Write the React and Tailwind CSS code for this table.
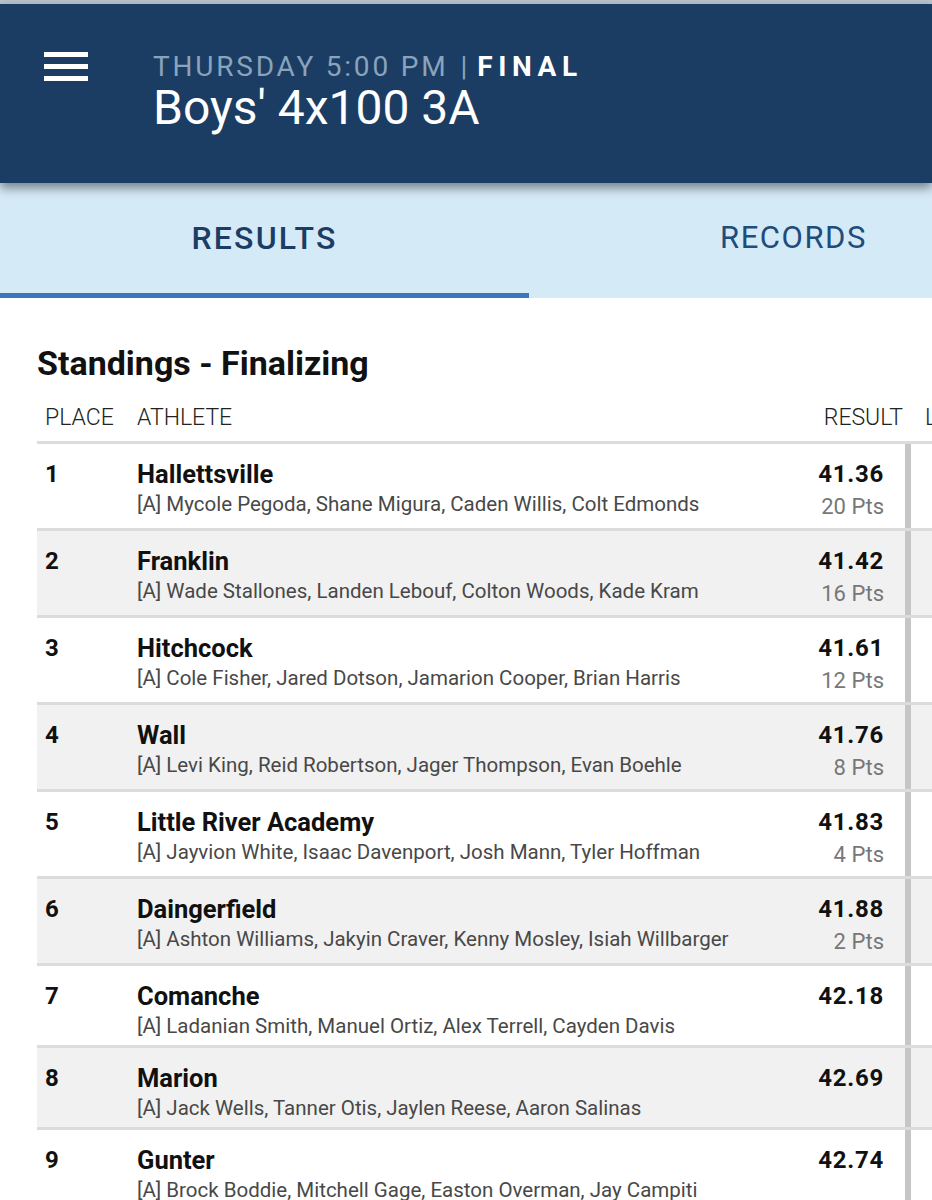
import React from 'react';

const rows = [
  { place: 1, team: 'Hallettsville', athletes: '[A] Mycole Pegoda, Shane Migura, Caden Willis, Colt Edmonds', result: '41.36', pts: '20 Pts' },
  { place: 2, team: 'Franklin', athletes: '[A] Wade Stallones, Landen Lebouf, Colton Woods, Kade Kram', result: '41.42', pts: '16 Pts' },
  { place: 3, team: 'Hitchcock', athletes: '[A] Cole Fisher, Jared Dotson, Jamarion Cooper, Brian Harris', result: '41.61', pts: '12 Pts' },
  { place: 4, team: 'Wall', athletes: '[A] Levi King, Reid Robertson, Jager Thompson, Evan Boehle', result: '41.76', pts: '8 Pts' },
  { place: 5, team: 'Little River Academy', athletes: '[A] Jayvion White, Isaac Davenport, Josh Mann, Tyler Hoffman', result: '41.83', pts: '4 Pts' },
  { place: 6, team: 'Daingerfield', athletes: '[A] Ashton Williams, Jakyin Craver, Kenny Mosley, Isiah Willbarger', result: '41.88', pts: '2 Pts' },
  { place: 7, team: 'Comanche', athletes: '[A] Ladanian Smith, Manuel Ortiz, Alex Terrell, Cayden Davis', result: '42.18' },
  { place: 8, team: 'Marion', athletes: '[A] Jack Wells, Tanner Otis, Jaylen Reese, Aaron Salinas', result: '42.69' },
  { place: 9, team: 'Gunter', athletes: '[A] Brock Boddie, Mitchell Gage, Easton Overman, Jay Campiti', result: '42.74' },
];

const Header = () => (
  <div className="relative z-10">
    <div className="h-[4px] bg-[#b9c3ce]" />
    <div className="h-[179px] bg-[#1b3d63] shadow-[0_5px_10px_rgba(0,0,0,0.45)] flex items-start pt-[48px]">
      <div className="ml-[44px] w-[44px] flex flex-col gap-[7px]">
        <div className="h-[5px] bg-white" />
        <div className="h-[5px] bg-white" />
        <div className="h-[5px] bg-white" />
      </div>
      <div className="ml-[65px]">
        <div className="text-[28px] leading-[30px] whitespace-nowrap">
          <span className="text-[#8aa3bc] tracking-[0.1em]">THURSDAY 5:00 PM</span>
          <span className="text-[#8aa3bc] ml-[12px] mr-[10px]">|</span>
          <span className="text-white font-bold tracking-[0.2em]">FINAL</span>
        </div>
        <div className="mt-[2px] text-white text-[48px] leading-none whitespace-nowrap">Boys' 4x100 3A</div>
      </div>
    </div>
  </div>
);

const Tabs = () => (
  <div className="flex h-[115px] bg-[#d5eaf7] overflow-hidden">
    <div className="w-[529px] shrink-0 flex flex-col">
      <div className="flex-1 flex items-center justify-center pb-[1px] text-[32px] leading-none font-medium tracking-[0.07em] text-[#1b3d63]">
        RESULTS
      </div>
      <div className="h-[5px] bg-[#3a76bd]" />
    </div>
    <div className="w-[529px] shrink-0 flex flex-col">
      <div className="flex-1 flex items-center justify-center pb-[1px] text-[31px] leading-none tracking-[0.05em] text-[#1f4c7b]">
        RECORDS
      </div>
      <div className="h-[5px]" />
    </div>
  </div>
);

const Row = ({ row, idx }) => (
  <div className={`flex w-[923px] border-b-[3px] border-[#dcdcdc] ${idx % 2 ? 'bg-[#f1f1f1]' : 'bg-white'}`}>
    <div className="w-[100px] shrink-0 pl-[8px] pt-[14px] text-[24px] leading-[32px] font-bold text-[#111]">
      {row.place}
    </div>
    <div className="w-[648px] shrink-0 pt-[14px] pb-[5px]">
      <div className="text-[25.5px] leading-[32px] font-bold text-[#111] whitespace-nowrap">{row.team}</div>
      <div className="text-[20.5px] leading-[28px] text-[#484848] whitespace-nowrap">{row.athletes}</div>
    </div>
    <div className="w-[120px] shrink-0 pr-[21px] pt-[14px] pb-[5px] text-right">
      <div className="text-[24px] leading-[32px] font-bold tracking-[0.03em] text-[#111]">{row.result}</div>
      {row.pts && <div className="text-[22px] leading-[33px] text-[#777]">{row.pts}</div>}
    </div>
    <div className="w-[55px] shrink-0 border-l-[6px] border-[#c6c6c6]" />
  </div>
);

export default function App() {
  return (
    <div className="w-[932px] h-[1200px] overflow-hidden bg-white font-['Roboto','Liberation_Sans',sans-serif]">
      <Header />
      <Tabs />
      <div className="pl-[37px] pt-[45px]">
        <h2 className="text-[34px] leading-[41px] font-bold text-[#111]">Standings - Finalizing</h2>
        <div className="mt-[12px] flex w-[923px] pt-[7px] pb-[8px] border-b-[3px] border-[#dcdcdc] text-[23px] leading-[30px] font-light text-[#222]">
          <div className="w-[100px] shrink-0 pl-[8px]">PLACE</div>
          <div className="w-[648px] shrink-0">ATHLETE</div>
          <div className="w-[120px] shrink-0 pr-[2px] text-right">RESULT</div>
          <div className="w-[55px] shrink-0 pl-[20px]">LANE</div>
        </div>
        {rows.map((row, i) => (
          <Row key={row.place} row={row} idx={i} />
        ))}
      </div>
    </div>
  );
}
